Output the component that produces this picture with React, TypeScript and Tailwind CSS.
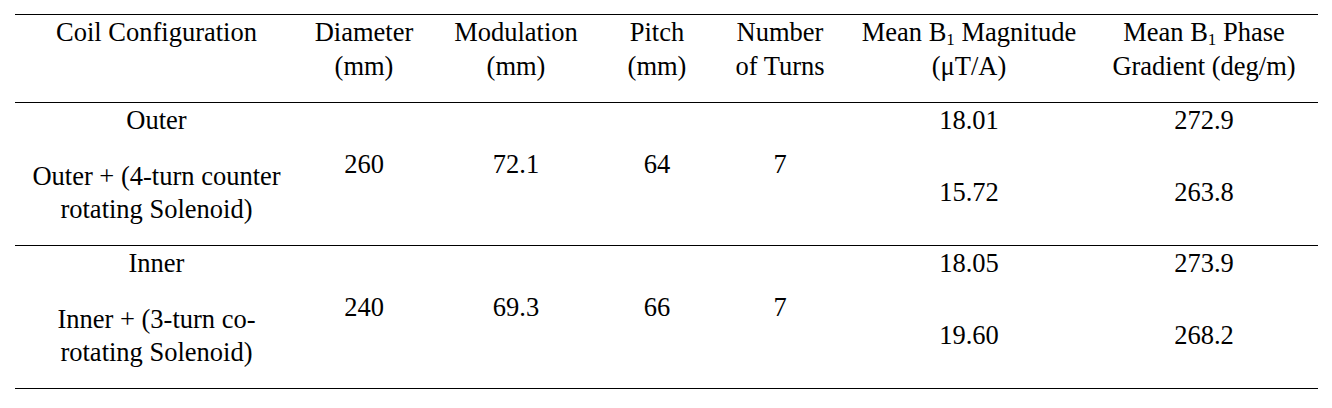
import React from "react";

const cols = "grid grid-cols-[283px_132px_172px_110px_136px_242px_228px] text-center";

const B1 = () => (
  <>
    B<sub className="text-[17px]">1</sub>
  </>
);

type Group = {
  base: string;
  withSolenoid: React.ReactNode;
  diameter: string;
  modulation: string;
  pitch: string;
  turns: string;
  magnitude: [string, string];
  phase: [string, string];
};

const groups: Group[] = [
  {
    base: "Outer",
    withSolenoid: (
      <>
        Outer + (4-turn counter
        <br />
        rotating Solenoid)
      </>
    ),
    diameter: "260",
    modulation: "72.1",
    pitch: "64",
    turns: "7",
    magnitude: ["18.01", "15.72"],
    phase: ["272.9", "263.8"],
  },
  {
    base: "Inner",
    withSolenoid: (
      <>
        Inner + (3-turn co-
        <br />
        rotating Solenoid)
      </>
    ),
    diameter: "240",
    modulation: "69.3",
    pitch: "66",
    turns: "7",
    magnitude: ["18.05", "19.60"],
    phase: ["273.9", "268.2"],
  },
];

function GroupRows({ g }: { g: Group }) {
  return (
    <div className={`${cols} h-[143px] border-t border-black pt-[1px] leading-[32px]`}>
      <div>
        <div>{g.base}</div>
        <div className="mt-[24px] leading-[33px]">{g.withSolenoid}</div>
      </div>
      <div className="pt-[44px]">{g.diameter}</div>
      <div className="pt-[44px]">{g.modulation}</div>
      <div className="pt-[44px]">{g.pitch}</div>
      <div className="pt-[44px]">{g.turns}</div>
      <div>
        <div>{g.magnitude[0]}</div>
        <div className="mt-[40px]">{g.magnitude[1]}</div>
      </div>
      <div>
        <div>{g.phase[0]}</div>
        <div className="mt-[40px]">{g.phase[1]}</div>
      </div>
    </div>
  );
}

export default function App() {
  return (
    <div className="w-[1332px] h-[408px] bg-white pt-[14px] pl-[15px] text-black font-['Liberation_Serif',_'Times_New_Roman',_serif] text-[26.5px]">
      <div className="w-[1303px]">
        <div className={`${cols} h-[88px] border-t border-black leading-[34px]`}>
          <div>Coil Configuration</div>
          <div>
            Diameter
            <br />
            (mm)
          </div>
          <div>
            Modulation
            <br />
            (mm)
          </div>
          <div>
            Pitch
            <br />
            (mm)
          </div>
          <div>
            Number
            <br />
            of Turns
          </div>
          <div>
            Mean <B1 /> Magnitude
            <br />
            (μT/A)
          </div>
          <div>
            Mean <B1 /> Phase
            <br />
            Gradient (deg/m)
          </div>
        </div>
        {groups.map((g, i) => (
          <GroupRows key={i} g={g} />
        ))}
        <div className="border-t border-black" />
      </div>
    </div>
  );
}
